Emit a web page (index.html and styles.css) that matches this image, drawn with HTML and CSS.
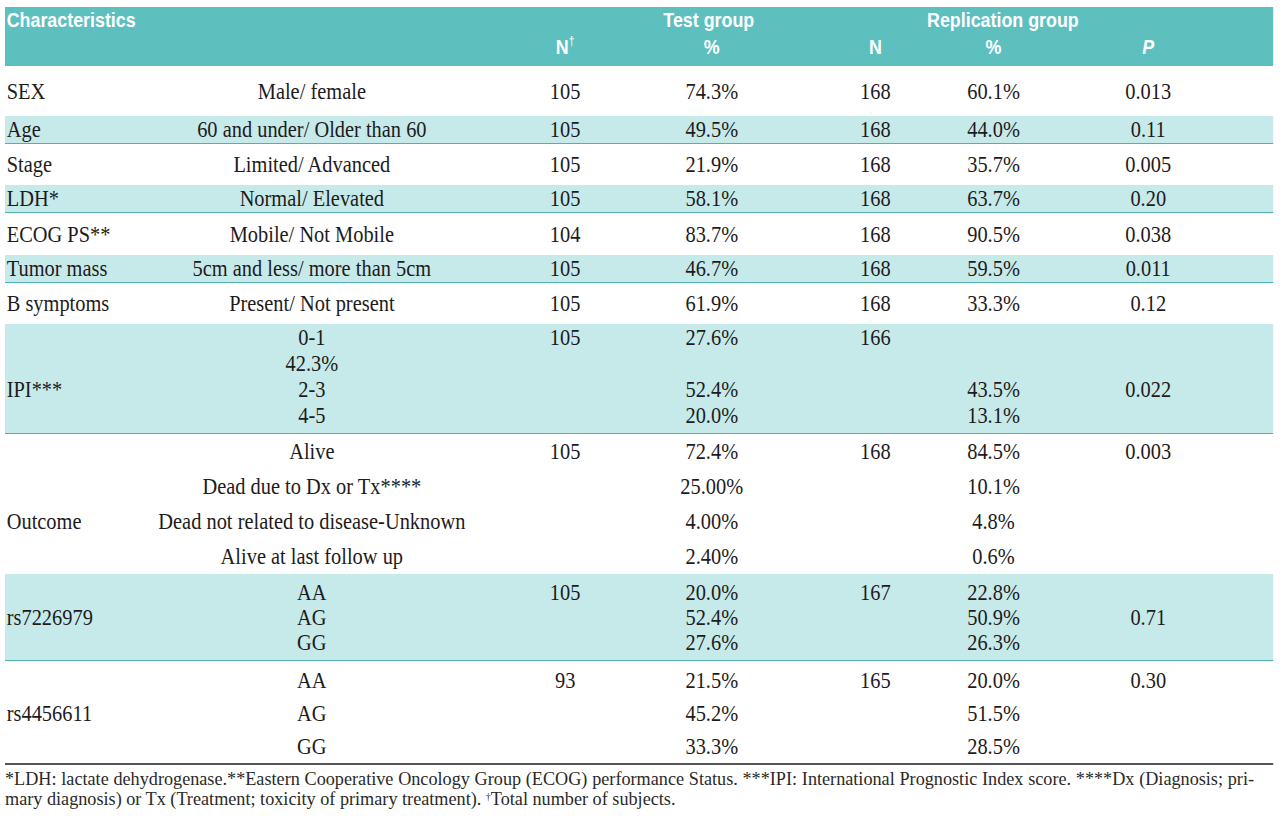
FILE: index.html
```html
<!DOCTYPE html>
<html lang="en">
<head>
<meta charset="utf-8">
<title>Characteristics table</title>
<link rel="stylesheet" href="styles.css">
</head>
<body>
<div class="page">
  <div class="tbl">
    <div class="head">
      <div class="row rh1">
        <div class="c1 lab">Characteristics</div>
        <div class="htest">Test group</div>
        <div class="hrep">Replication group</div>
      </div>
      <div class="row rh2">
        <div class="c3">N<sup class="dag">†</sup></div>
        <div class="c4">%</div>
        <div class="c5">N</div>
        <div class="c6">%</div>
        <div class="c7"><i>P</i></div>
      </div>
    </div>

    <div class="grp first">
      <div class="row">
        <div class="c1 lab">SEX</div><div class="c2">Male/ female</div><div class="c3">105</div><div class="c4">74.3%</div><div class="c5">168</div><div class="c6">60.1%</div><div class="c7">0.013</div>
      </div>
    </div>
    <div class="grp band">
      <div class="row">
        <div class="c1 lab">Age</div><div class="c2">60 and under/ Older than 60</div><div class="c3">105</div><div class="c4">49.5%</div><div class="c5">168</div><div class="c6">44.0%</div><div class="c7">0.11</div>
      </div>
    </div>
    <div class="grp plain">
      <div class="row">
        <div class="c1 lab">Stage</div><div class="c2">Limited/ Advanced</div><div class="c3">105</div><div class="c4">21.9%</div><div class="c5">168</div><div class="c6">35.7%</div><div class="c7">0.005</div>
      </div>
    </div>
    <div class="grp band">
      <div class="row">
        <div class="c1 lab">LDH*</div><div class="c2">Normal/ Elevated</div><div class="c3">105</div><div class="c4">58.1%</div><div class="c5">168</div><div class="c6">63.7%</div><div class="c7">0.20</div>
      </div>
    </div>
    <div class="grp plain tall">
      <div class="row">
        <div class="c1 lab">ECOG PS**</div><div class="c2">Mobile/ Not Mobile</div><div class="c3">104</div><div class="c4">83.7%</div><div class="c5">168</div><div class="c6">90.5%</div><div class="c7">0.038</div>
      </div>
    </div>
    <div class="grp band">
      <div class="row">
        <div class="c1 lab">Tumor mass</div><div class="c2">5cm and less/ more than 5cm</div><div class="c3">105</div><div class="c4">46.7%</div><div class="c5">168</div><div class="c6">59.5%</div><div class="c7">0.011</div>
      </div>
    </div>
    <div class="grp plain">
      <div class="row">
        <div class="c1 lab">B symptoms</div><div class="c2">Present/ Not present</div><div class="c3">105</div><div class="c4">61.9%</div><div class="c5">168</div><div class="c6">33.3%</div><div class="c7">0.12</div>
      </div>
    </div>

    <div class="grp band ipi">
      <div class="row">
        <div class="c2">0-1</div><div class="c3">105</div><div class="c4">27.6%</div><div class="c5">166</div>
      </div>
      <div class="row">
        <div class="c2">42.3%</div>
      </div>
      <div class="row">
        <div class="c1 lab">IPI***</div><div class="c2">2-3</div><div class="c4">52.4%</div><div class="c6">43.5%</div><div class="c7">0.022</div>
      </div>
      <div class="row">
        <div class="c2">4-5</div><div class="c4">20.0%</div><div class="c6">13.1%</div>
      </div>
    </div>

    <div class="grp outcome">
      <div class="row">
        <div class="c2">Alive</div><div class="c3">105</div><div class="c4">72.4%</div><div class="c5">168</div><div class="c6">84.5%</div><div class="c7">0.003</div>
      </div>
      <div class="row">
        <div class="c2">Dead due to Dx or Tx****</div><div class="c4">25.00%</div><div class="c6">10.1%</div>
      </div>
      <div class="row">
        <div class="c1 lab">Outcome</div><div class="c2">Dead not related to disease-Unknown</div><div class="c4">4.00%</div><div class="c6">4.8%</div>
      </div>
      <div class="row">
        <div class="c2">Alive at last follow up</div><div class="c4">2.40%</div><div class="c6">0.6%</div>
      </div>
    </div>

    <div class="grp band snp1">
      <div class="row">
        <div class="c2">AA</div><div class="c3">105</div><div class="c4">20.0%</div><div class="c5">167</div><div class="c6">22.8%</div>
      </div>
      <div class="row">
        <div class="c1 lab">rs7226979</div><div class="c2">AG</div><div class="c4">52.4%</div><div class="c6">50.9%</div><div class="c7">0.71</div>
      </div>
      <div class="row">
        <div class="c2">GG</div><div class="c4">27.6%</div><div class="c6">26.3%</div>
      </div>
    </div>

    <div class="grp snp2">
      <div class="row">
        <div class="c2">AA</div><div class="c3">93</div><div class="c4">21.5%</div><div class="c5">165</div><div class="c6">20.0%</div><div class="c7">0.30</div>
      </div>
      <div class="row">
        <div class="c1 lab">rs4456611</div><div class="c2">AG</div><div class="c4">45.2%</div><div class="c6">51.5%</div>
      </div>
      <div class="row">
        <div class="c2">GG</div><div class="c4">33.3%</div><div class="c6">28.5%</div>
      </div>
    </div>
  </div>

  <div class="notes">
    <p class="note-line1">*LDH: lactate dehydrogenase.**Eastern Cooperative Oncology Group (ECOG) performance Status. ***IPI: International Prognostic Index score. ****Dx (Diagnosis; pri-</p>
    <p class="note-line2">mary diagnosis) or Tx (Treatment; toxicity of primary treatment). <sup class="ndag">†</sup>Total number of subjects.</p>
  </div>
</div>
</body>
</html>
```
FILE: styles.css
```css
html, body {
  margin: 0;
  padding: 0;
  background: #ffffff;
  overflow: hidden;
}

.page {
  padding: 7px 0 0 5px;
  width: 1268px;
}

/* The table is laid out on a wider canvas and condensed horizontally,
   matching the condensed typeface of the original. */
.tbl {
  width: 1492px;
  transform: scaleX(0.85);
  transform-origin: 0 0;
  font-family: "Liberation Serif", "Times New Roman", serif;
  font-size: 24px;
  color: #1e1b1c;
}

.row {
  display: grid;
  grid-template-columns: 176px 370px 200px 176px 176px 142px 252px;
  align-items: center;
  text-align: center;
  white-space: nowrap;
}

.c1 { grid-column: 1; }
.c2 { grid-column: 2; }
.c3 { grid-column: 3; padding-left: 26px; }
.c4 { grid-column: 4; padding-right: 5px; }
.c5 { grid-column: 5; padding-left: 28px; }
.c6 { grid-column: 6; padding-right: 12px; }
.c7 { grid-column: 7; padding-right: 42px; }

.lab {
  text-align: left;
  padding-left: 2px;
}

/* header */
.head {
  background: #5ebfbf;
  color: #ffffff;
  font-family: "Liberation Sans", Arial, sans-serif;
  font-weight: 700;
  font-size: 21px;
  padding-bottom: 5px;
}
.rh1 { height: 26px; }
.rh2 { height: 28px; }
.htest {
  grid-column: 4;
  padding-right: 12px;
}
.hrep {
  grid-column: 5 / span 3;
  padding-right: 66px;
}
.dag {
  font-size: 12px;
  font-weight: 400;
  vertical-align: 9px;
  line-height: 0;
}

/* body groups */
.grp .row { height: 41px; }
.grp.first .row { height: 50px; }
.grp.tall .row { height: 42px; }

.band {
  background: #c6eaea;
  border-bottom: 1px solid #4fb2b2;
}
.band .row { height: 27px; }

.ipi { padding-bottom: 5px; }
.ipi .row { height: 26px; }

.outcome .row { height: 35px; }

.snp1 { padding: 5px 0 6px; }
.snp1 .row { height: 25px; }

.snp2 {
  padding-top: 3px;
  border-bottom: 2px solid #555555;
}
.snp2 .row { height: 33px; }

/* footnotes */
.notes {
  width: 1249px;
  padding-top: 4px;
  font-family: "Liberation Serif", "Times New Roman", serif;
  font-size: 18.2px;
  line-height: 20px;
  color: #2a2a2a;
}
.notes p {
  margin: 0;
}
.note-line1 {
  text-align: justify;
  text-align-last: justify;
}
.ndag {
  font-size: 10px;
  vertical-align: 5px;
  line-height: 0;
}
```
